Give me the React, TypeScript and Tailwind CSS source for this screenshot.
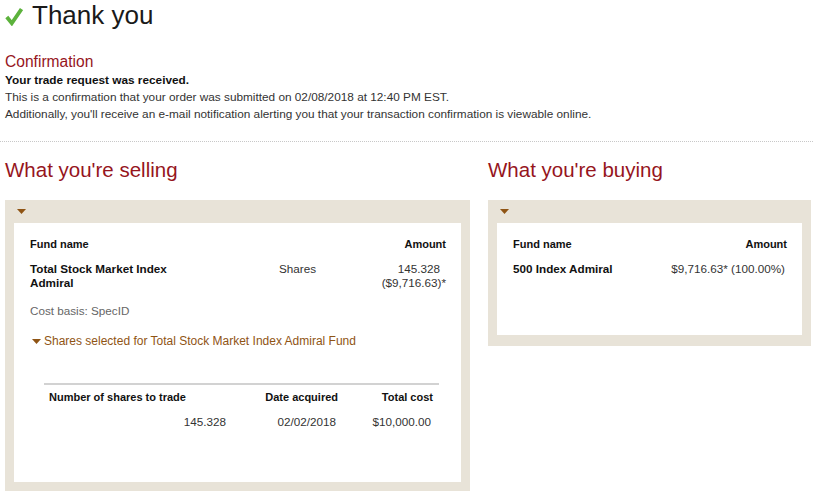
export default function App() {
  return (
    <div
      className="min-h-screen bg-white px-[5px] text-[#333]"
      style={{ fontFamily: '"Liberation Sans", Arial, sans-serif' }}
    >
      {/* Title */}
      <div className="flex h-[30px] items-center">
        <svg width="18" height="19" viewBox="0 0 18 19" className="mt-[2px] shrink-0">
          <path d="M1.8 10 L6.8 16.2 L16.5 2" fill="none" stroke="#5cb23c" strokeWidth="3.8" />
        </svg>
        <h1 className="ml-[9px] text-[26px] leading-[30px] text-[#1a1a1a]">Thank you</h1>
      </div>

      {/* Confirmation */}
      <h2 className="mt-[22px] text-[15.6px] leading-[20px] text-[#96151d]">Confirmation</h2>
      <p className="text-[11.8px] font-bold leading-[17px] text-[#111]">Your trade request was received.</p>
      <p className="text-[11.8px] leading-[17px]">
        This is a confirmation that your order was submitted on 02/08/2018 at 12:40 PM EST.
      </p>
      <p className="text-[11.8px] leading-[17px]">
        Additionally, you'll receive an e-mail notification alerting you that your transaction confirmation is viewable online.
      </p>

      <div className="-mx-[5px] mt-[18px] border-t border-dotted border-[#c8c8c8]" />

      <div className="mt-[16px] flex items-start gap-[18px]">
        {/* Selling */}
        <div className="w-[465px] shrink-0">
          <h2 className="text-[20.5px] leading-[24px] text-[#96151d]">What you're selling</h2>
          <div className="mt-[18px] bg-[#e8e3d8] px-[9px] pb-[9px]">
            <div className="flex h-[23px] items-start pl-[3px] pt-[9px]">
              <Caret />
            </div>
            <div className="bg-white pb-[53px] pl-[16px] pr-[15px] pt-[14px] text-[11.7px] leading-[14px]">
              <div className="flex text-[11px] font-bold text-[#111]">
                <span className="flex-1">Fund name</span>
                <span>Amount</span>
              </div>
              <div className="mt-[11px] flex">
                <span className="w-[160px] font-bold text-[#111]">Total Stock Market Index Admiral</span>
                <span className="ml-[89px]">Shares</span>
                <span className="flex-1 text-right">
                  <span className="block pr-[6px]">145.328</span>
                  <span className="block">($9,716.63)*</span>
                </span>
              </div>
              <p className="mt-[14px] text-[#666]">Cost basis: SpecID</p>
              <div className="mt-[16px] flex items-center pl-[2px] text-[12px] text-[#8f5414]">
                <Caret />
                <span className="ml-[3px]">Shares selected for Total Stock Market Index Admiral Fund</span>
              </div>
              <div className="ml-[14px] mr-[7px] mt-[35px] border-t-2 border-[#d2d2d2]">
                <div className="mt-[5px] grid grid-cols-[177px_112px_95px] pl-[5px] text-[11px] font-bold text-[#111]">
                  <span className="whitespace-nowrap">Number of shares to trade</span>
                  <span className="text-right">Date acquired</span>
                  <span className="text-right">Total cost</span>
                </div>
                <div className="mt-[11px] grid grid-cols-[177px_110px_95px] pl-[5px]">
                  <span className="text-right">145.328</span>
                  <span className="text-right">02/02/2018</span>
                  <span className="text-right">$10,000.00</span>
                </div>
              </div>
            </div>
          </div>
        </div>

        {/* Buying */}
        <div className="w-[323px] shrink-0">
          <h2 className="text-[20.5px] leading-[24px] text-[#96151d]">What you're buying</h2>
          <div className="mt-[18px] bg-[#e8e3d8] px-[9px] pb-[11px]">
            <div className="flex h-[23px] items-start pl-[3px] pt-[9px]">
              <Caret />
            </div>
            <div className="h-[112px] bg-white pl-[16px] pr-[15px] pt-[14px] text-[11.7px] leading-[14px]">
              <div className="flex text-[11px] font-bold text-[#111]">
                <span className="flex-1">Fund name</span>
                <span>Amount</span>
              </div>
              <div className="mt-[11px] flex">
                <span className="flex-1 font-bold text-[#111]">500 Index Admiral</span>
                <span className="pr-[2px]">$9,716.63* (100.00%)</span>
              </div>
            </div>
          </div>
        </div>
      </div>
    </div>
  );
}

function Caret() {
  return (
    <svg width="9" height="5" viewBox="0 0 9 5" className="shrink-0">
      <path d="M0 0 H9 L4.5 5 Z" fill="#8f5414" />
    </svg>
  );
}
